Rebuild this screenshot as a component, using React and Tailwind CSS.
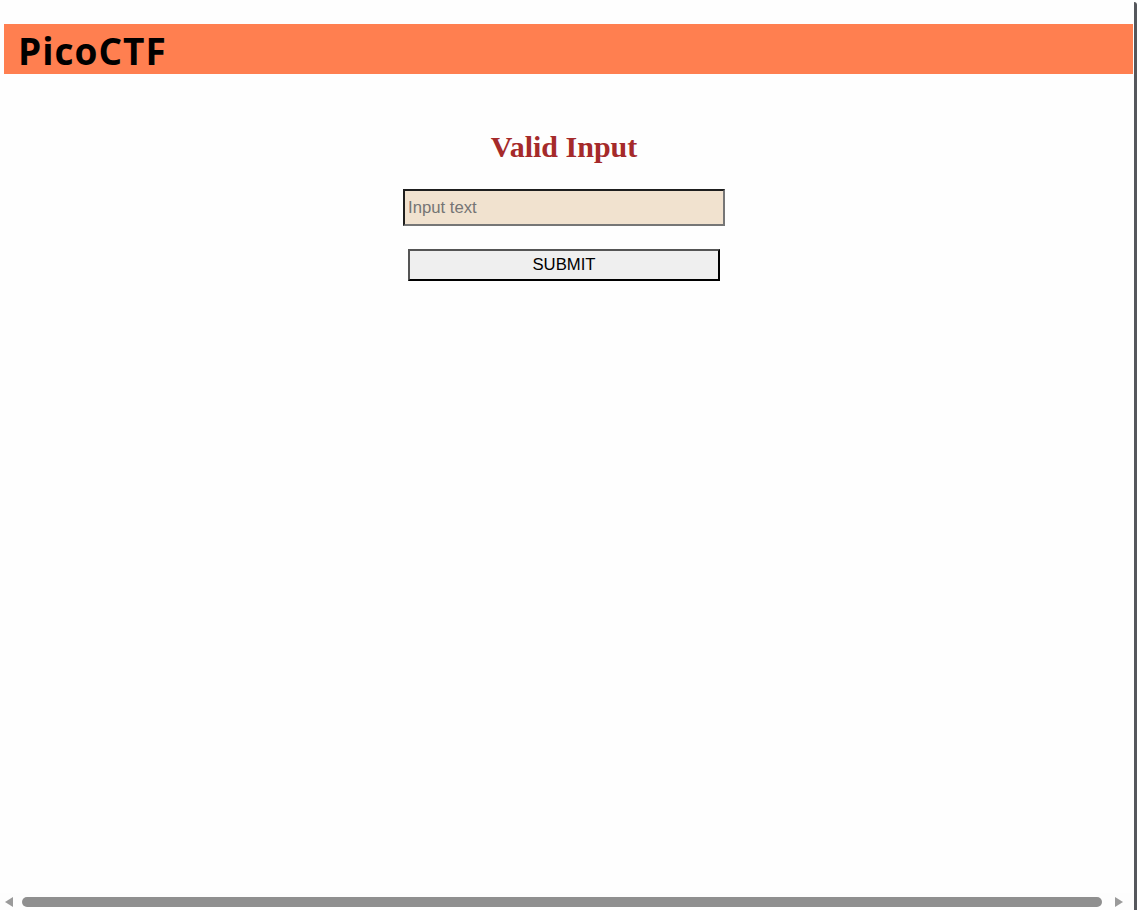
import React from 'react';

function ScrollBar() {
    return (
        <div className="h-[17px] flex items-center bg-[#fdfdfd]">
            <div className="w-[22px] flex justify-start pl-[5px] shrink-0">
                <svg width="8" height="10" viewBox="0 0 8 10">
                    <polygon points="0,5 8,0 8,10" fill="#9a9a9a" />
                </svg>
            </div>
            <div className="w-[1080px] h-[10px] rounded-full bg-[#8f8f8f]" />
            <div className="flex pl-[13px] shrink-0">
                <svg width="8" height="10" viewBox="0 0 8 10">
                    <polygon points="8,5 0,0 0,10" fill="#9a9a9a" />
                </svg>
            </div>
        </div>
    );
}

export default function App() {
    return (
        <div className="w-[1137px] h-[910px] bg-[#fefefe] flex overflow-hidden">
            <div className="w-[1134px] h-full flex flex-col">
                <div className="pt-[24px] pl-[4px]">
                    <div className="h-[50px] w-[1129px] bg-[#ff7f50] pl-[14px] flex items-center">
                        <h1
                            className="text-[37px] leading-[50px] pt-[4px] font-bold tracking-[1px] text-black"
                            style={{ fontFamily: '"Open Sans", "Noto Sans", sans-serif' }}
                        >
                            PicoCTF
                        </h1>
                    </div>
                </div>

                <div className="flex-1 w-[1128px] flex flex-col items-center pt-[55px]">
                    <h2
                        className="text-[30px] leading-[35px] font-bold text-[#a52a2a]"
                        style={{ fontFamily: '"Liberation Serif", "Times New Roman", serif' }}
                    >
                        Valid Input
                    </h2>
                    <input
                        type="text"
                        placeholder="Input text"
                        className="mt-[25px] w-[322px] h-[37px] bg-[#f1e2cf] border-2 border-t-[#1e1e1e] border-l-[#1e1e1e] border-b-[#767676] border-r-[#767676] px-[3px] text-[16.7px] text-black placeholder:text-[#757575] outline-none"
                        style={{ fontFamily: '"Liberation Sans", Arial, sans-serif' }}
                    />
                    <button
                        className="mt-[23px] w-[312px] h-[32px] bg-[#efefef] border-2 border-t-[#555] border-l-[#555] border-b-black border-r-black text-[16.7px] text-black"
                        style={{ fontFamily: '"Liberation Sans", Arial, sans-serif' }}
                    >
                        SUBMIT
                    </button>
                </div>

                <ScrollBar />
            </div>
            <div className="w-[3px] h-full mt-[2px] rounded-tr-[4px] bg-[#55575c]" />
        </div>
    );
}
